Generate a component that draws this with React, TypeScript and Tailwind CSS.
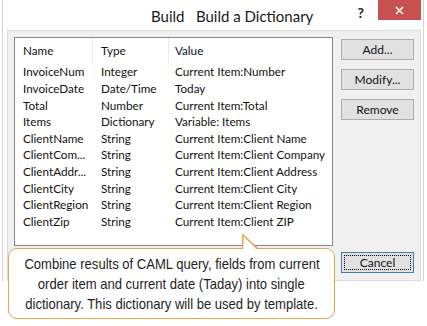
import React from "react"

const rows = [
  ["InvoiceNum", "Integer", "Current Item:Number"],
  ["InvoiceDate", "Date/Time", "Today"],
  ["Total", "Number", "Current Item:Total"],
  ["Items", "Dictionary", "Variable: Items"],
  ["ClientName", "String", "Current Item:Client Name"],
  ["ClientCom...", "String", "Current Item:Client Company"],
  ["ClientAddr...", "String", "Current Item:Client Address"],
  ["ClientCity", "String", "Current Item:Client City"],
  ["ClientRegion", "String", "Current Item:Client Region"],
  ["ClientZip", "String", "Current Item:Client ZIP"],
]

const callout = [
  "Combine results of CAML query, fields from current",
  "order item and current date (Taday) into single",
  "dictionary. This dictionary will be used by template.",
]

function DlgButton({ label, focused }: { label: string; focused?: boolean }) {
  return (
    <button
      className={
        "w-[73px] h-[21px] bg-[#e1e1e1] text-[12px] text-[#111] flex items-center justify-center border " +
        (focused ? "border-[#3c7fb1] p-[2px]" : "border-[#adadad]")
      }
    >
      {focused ? (
        <span className="w-full h-full flex items-center justify-center border border-dotted border-black">
          {label}
        </span>
      ) : (
        label
      )}
    </button>
  )
}

export default function App() {
  return (
    <div className="relative w-[427px] h-[326px] bg-white overflow-hidden font-['Lato','Noto_Sans',sans-serif]">
      {/* window */}
      <div className="ml-[2px] w-[422px] h-[281px] border-x border-[#d4d4d4] flex flex-col">
        {/* title bar */}
        <div className="h-[30px] flex items-start shrink-0">
          <div className="ml-[148px] mt-[5px] text-[15px] text-[#1a1a1a] whitespace-pre">
            Build   Build a Dictionary
          </div>
          <div className="ml-auto mt-[2px] mr-[14px] text-[14px] font-bold text-[#222]">?</div>
          <div className="w-[43px] h-[20px] mr-[2px] bg-[#c75050] flex items-center justify-center">
            <svg width="9" height="9" viewBox="0 0 9 9">
              <path d="M1 1L8 8M8 1L1 8" stroke="white" strokeWidth="1.6" />
            </svg>
          </div>
        </div>
        {/* client area */}
        <div className="flex-1 ml-[4px] mr-[2px] bg-[#f0f0f0] border border-[#dcdcdc] flex items-start pt-[6px] pl-[6px]">
          <div className="w-[319px] h-[209px] bg-white border border-[#828790] text-[11.7px] text-[#111] whitespace-nowrap">
            <div className="h-[26px] grid grid-cols-[78px_76px_1fr] items-center">
              <div className="pl-[8px] h-full flex items-center border-r border-[#ececec]">Name</div>
              <div className="pl-[8px] h-full flex items-center border-r border-[#ececec]">Type</div>
              <div className="pl-[6px]">Value</div>
            </div>
            {rows.map((r) => (
              <div key={r[0]} className="h-[16.6px] grid grid-cols-[78px_76px_1fr] items-center leading-none">
                <div className="pl-[8px]">{r[0]}</div>
                <div className="pl-[8px]">{r[1]}</div>
                <div className="pl-[6px]">{r[2]}</div>
              </div>
            ))}
          </div>
          <div className="ml-[8px] mt-[2px] h-[234px] flex flex-col gap-[9px]">
            <DlgButton label="Add..." />
            <DlgButton label="Modify..." />
            <DlgButton label="Remove" />
            <div className="mt-auto">
              <DlgButton label="Cancel" focused />
            </div>
          </div>
        </div>
      </div>

      {/* callout */}
      <div className="absolute left-[8px] top-[248px] w-[327px] h-[71px] rounded-[9px] border-[1.5px] border-[#e3a64a] bg-white pt-[5px] flex flex-col items-center text-[14.5px] leading-[20px] text-[#1e1e1e] font-['Liberation_Sans',Arial,sans-serif]">
        {callout.map((l) => (
          <div key={l} className="whitespace-nowrap scale-x-[0.9] origin-center">
            {l}
          </div>
        ))}
      </div>
      <svg className="absolute left-[238px] top-[232px]" width="24" height="19" viewBox="0 0 24 19">
        <polygon points="4.5,18.5 5,3 19.5,18.5" fill="white" />
        <polyline points="4.5,17 5,3 20,17" fill="none" stroke="#e3a64a" strokeWidth="1.5" />
      </svg>
    </div>
  )
}
